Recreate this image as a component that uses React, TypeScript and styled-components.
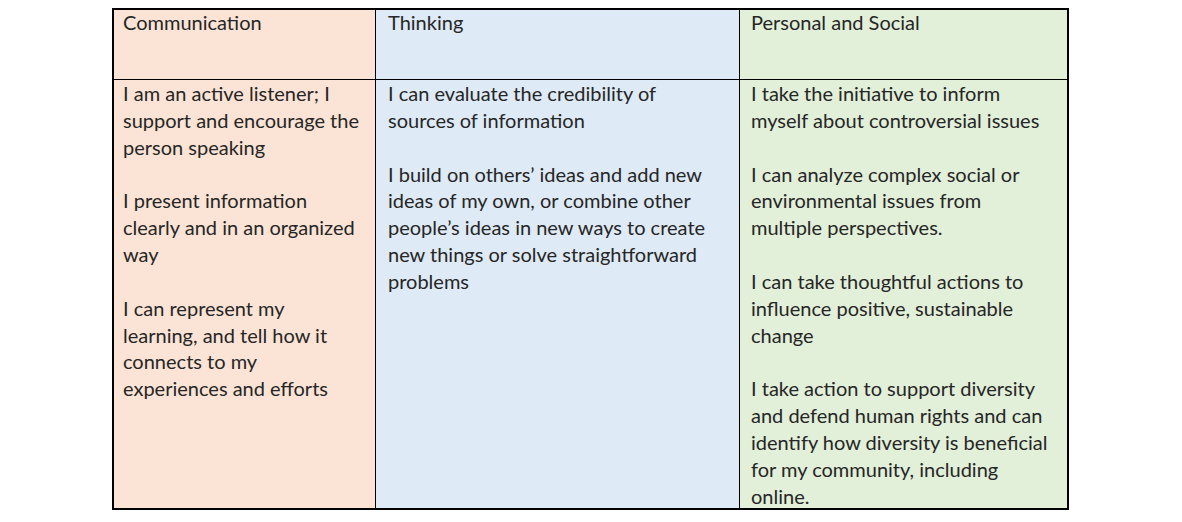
import React from "react";
import styled, { createGlobalStyle } from "styled-components";

const GlobalStyle = createGlobalStyle`
  html, body { margin: 0; padding: 0; background: #ffffff; }
  body { font-family: "Lato", "Open Sans", sans-serif; }
`;

const Page = styled.div`
  padding: 8px 0 0 112px;
`;

const Table = styled.div`
  box-sizing: border-box;
  width: 957px;
  height: 502px;
  border: 2px solid #000;
  display: grid;
  grid-template-columns: 262px 364px 327px;
  grid-template-rows: 70px 428px;
`;

const Cell = styled.div<{ $bg: string; $last?: boolean; $head?: boolean; $padLeft: number }>`
  box-sizing: border-box;
  background: ${(p) => p.$bg};
  border-right: ${(p) => (p.$last ? "none" : "1px solid #000")};
  border-bottom: ${(p) => (p.$head ? "1px solid #000" : "none")};
  padding: 0 4px 0 ${(p) => p.$padLeft}px;
  overflow: hidden;
  font-size: 20px;
  line-height: 26.85px;
  color: #262626;
`;

const HeadText = styled.div`
  margin-top: -1px;
`;

const Para = styled.p`
  margin: 0 0 26.85px 0;
  white-space: nowrap;
  &:last-child { margin-bottom: 0; }
`;

type Col = { title: string; bg: string; pad: number; paras: string[][] };

const columns: Col[] = [
  {
    title: "Communication",
    bg: "#fbe4d5",
    pad: 9,
    paras: [
      ["I am an active listener; I", "support and encourage the", "person speaking"],
      ["I present information", "clearly and in an organized", "way"],
      ["I can represent my", "learning, and tell how it", "connects to my", "experiences and efforts"],
    ],
  },
  {
    title: "Thinking",
    bg: "#deeaf6",
    pad: 12,
    paras: [
      ["I can evaluate the credibility of", "sources of information"],
      [
        "I build on others’ ideas and add new",
        "ideas of my own, or combine other",
        "people’s ideas in new ways to create",
        "new things or solve straightforward",
        "problems",
      ],
    ],
  },
  {
    title: "Personal and Social",
    bg: "#e2efd9",
    pad: 11,
    paras: [
      ["I take the initiative to inform", "myself about controversial issues"],
      ["I can analyze complex social or", "environmental issues from", "multiple perspectives."],
      ["I can take thoughtful actions to", "influence positive, sustainable", "change"],
      [
        "I take action to support diversity",
        "and defend human rights and can",
        "identify how diversity is beneficial",
        "for my community, including",
        "online.",
      ],
    ],
  },
];

export default function App() {
  return (
    <Page>
      <GlobalStyle />
      <Table>
        {columns.map((c, i) => (
          <Cell key={"h" + i} $bg={c.bg} $head $last={i === columns.length - 1} $padLeft={c.pad}>
            <HeadText>{c.title}</HeadText>
          </Cell>
        ))}
        {columns.map((c, i) => (
          <Cell key={"b" + i} $bg={c.bg} $last={i === columns.length - 1} $padLeft={c.pad}>
            {c.paras.map((p, j) => (
              <Para key={j}>
                {p.map((line, k) => (
                  <React.Fragment key={k}>
                    {line}
                    {k < p.length - 1 && <br />}
                  </React.Fragment>
                ))}
              </Para>
            ))}
          </Cell>
        ))}
      </Table>
    </Page>
  );
}
